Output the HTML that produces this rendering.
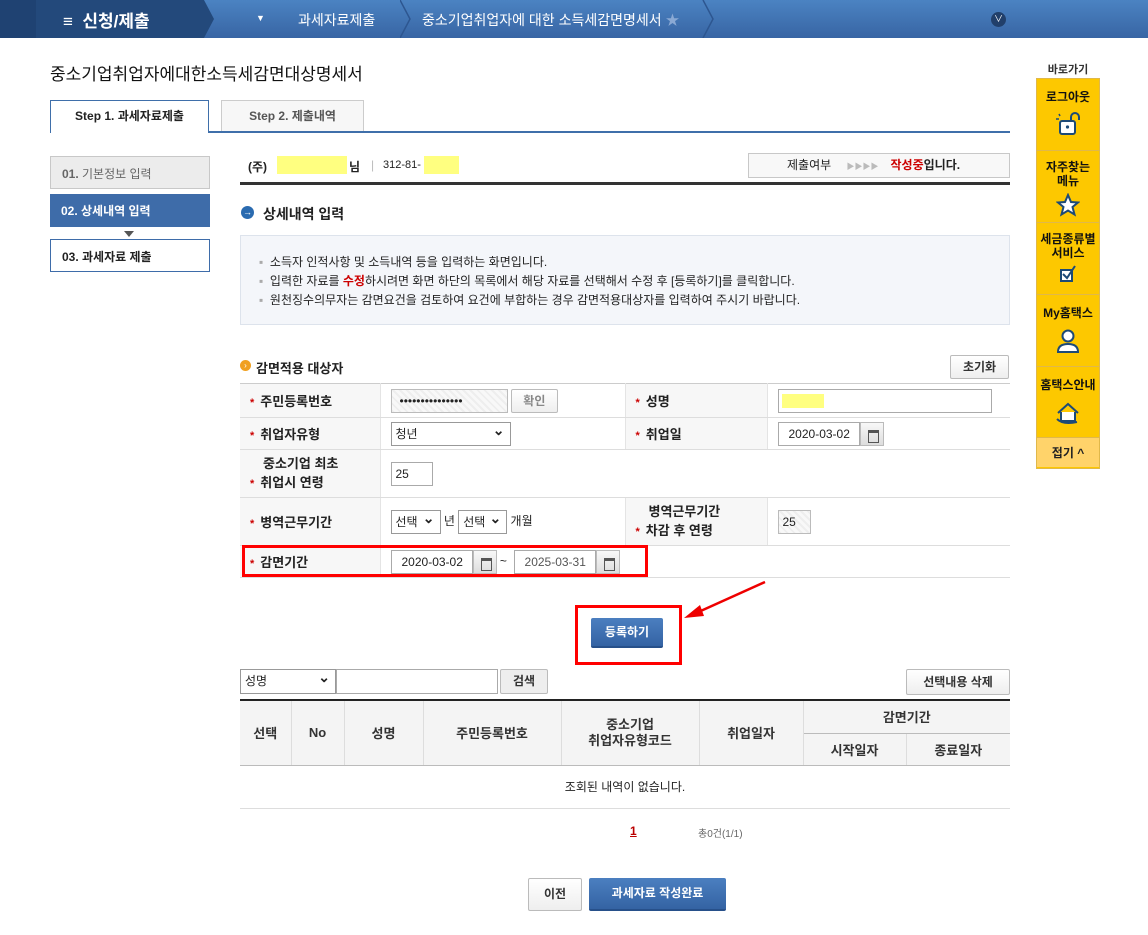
<!DOCTYPE html>
<html><head><meta charset="utf-8"><style>
*{margin:0;padding:0;box-sizing:border-box}
body{width:1148px;height:935px;position:relative;background:#fff;font-family:"Liberation Sans","Noto Sans CJK KR","NanumGothic",sans-serif;font-size:12px;color:#222;overflow:hidden}
.a{position:absolute}
.top{left:0;top:0;width:1148px;height:38px;background:linear-gradient(#4b83c2,#3865a4)}
.btn{position:absolute;border:1px solid #bbb;background:linear-gradient(#fff,#eee);text-align:center;font-weight:bold;color:#333;border-radius:2px}
.bb{position:absolute;background:linear-gradient(#4b7fc0,#3463a3);color:#fff;font-weight:bold;text-align:center;border-radius:2px;border-bottom:2px solid #27508a}
table{border-collapse:collapse}
.ft td{border-bottom:1px solid #ddd;height:32px;vertical-align:middle}
.ft td.l{background:#f7f7f7;font-weight:bold;font-size:13px;padding-left:10px;border-right:1px solid #e4e4e4}
.ft td.v{padding-left:10px;border-right:1px solid #e4e4e4}
.st{color:#c00;font-size:11px;margin-right:6px}
.inp{display:inline-block;border:1px solid #aaa;height:24px;line-height:22px;padding-left:8px;font-size:12px;vertical-align:middle;background:#fff}
.cal{display:inline-block;width:24px;height:24px;border:1px solid #bbb;background:linear-gradient(#f8f8f8,#ddd);vertical-align:middle;position:relative}
.cal:after{content:"";position:absolute;left:7px;top:7px;width:9px;height:9px;border:1px solid #555;border-top:3px solid #555}
.hatch{background:repeating-linear-gradient(45deg,#eee 0 2px,#f8f8f8 2px 5px)}
.sel{display:inline-block;border:1px solid #999;height:24px;line-height:22px;padding-left:4px;vertical-align:middle;position:relative;background:#fff;font-size:12px}
.sel:after{content:"⌄";position:absolute;right:5px;top:-4px;font-weight:bold;font-size:14px}
.lt th{background:#f4f4f4;font-size:13px;font-weight:bold;border-right:1px solid #ddd;border-bottom:1px solid #bbb;color:#333}
.side div.s{height:72px;border-bottom:1px solid #e0b84a;text-align:center;font-weight:bold;font-size:12px;padding-top:9px;color:#111;position:relative}
</style></head><body>
<div class="a top"></div>
<div class="a" style="left:0;top:0;width:36px;height:38px;background:#1f4272"></div>
<div class="a" style="left:36px;top:0;width:167px;height:38px;background:#23497b"></div>
<svg class="a" style="left:200px;top:0" width="14" height="38"><polygon points="0,0 4,0 14,19 4,38 0,38" fill="#23497b"/></svg>
<svg class="a" style="left:400px;top:0" width="12" height="38"><polyline points="0,0 10,19 0,38" fill="none" stroke="#2d5690" stroke-width="1.5"/></svg>
<svg class="a" style="left:700px;top:0" width="14" height="38"><polyline points="3,0 13,19 3,38" fill="none" stroke="#2d5690" stroke-width="1.5"/></svg>
<div class="a" style="left:63px;top:7px;color:#fff;font-size:17px;font-weight:bold">≡&nbsp; 신청/제출</div>
<div class="a" style="left:256px;top:13px;color:#fff;font-size:9px">▼</div>
<div class="a" style="left:298px;top:10px;color:#fff;font-size:14px">과세자료제출</div>
<div class="a" style="left:422px;top:10px;color:#fff;font-size:14px">중소기업취업자에 대한 소득세감면명세서 <span style="color:#8aa9d4">★</span></div>
<div class="a" style="left:991px;top:12px;width:15px;height:15px;border-radius:50%;background:#213f6a;color:#fff;font-size:9px;text-align:center;line-height:15px">∨</div>

<div class="a" style="left:50px;top:60px;font-size:17px;color:#111">중소기업취업자에대한소득세감면대상명세서</div>
<div class="a" style="left:50px;top:131px;width:960px;height:2px;background:#3f6faa"></div>
<div class="a" style="left:50px;top:100px;width:159px;height:33px;border:1px solid #3f6faa;border-bottom:none;background:#fff;text-align:center;line-height:31px;font-weight:bold;font-size:12px;color:#222">Step 1. 과세자료제출</div>
<div class="a" style="left:221px;top:100px;width:143px;height:31px;border:1px solid #ccc;border-bottom:none;background:#f7f7f7;text-align:center;line-height:31px;font-weight:bold;font-size:12px;color:#555">Step 2. 제출내역</div>

<div class="a" style="left:50px;top:156px;width:160px;height:33px;background:#ececec;border:1px solid #c8c8c8;padding:8px 11px;color:#666;font-size:12px"><b>01.</b> 기본정보 입력</div>
<div class="a" style="left:50px;top:194px;width:160px;height:33px;background:#3e6ca9;padding:8px 11px;color:#fff;font-weight:bold;font-size:12px">02. 상세내역 입력</div>
<div class="a" style="left:124px;top:231px;width:0;height:0;border-left:5px solid transparent;border-right:5px solid transparent;border-top:6px solid #555"></div>
<div class="a" style="left:50px;top:239px;width:160px;height:33px;background:#fff;border:1px solid #3e6ca9;padding:8px 11px;color:#222;font-weight:bold;font-size:12px">03. 과세자료 제출</div>

<div class="a" style="left:248px;top:158px;font-weight:bold;font-size:12px">(주)</div>
<div class="a" style="left:277px;top:156px;width:70px;height:18px;background:#ffff80"></div>
<div class="a" style="left:349px;top:158px;font-weight:bold;font-size:12px">님</div>
<div class="a" style="left:371px;top:158px;color:#bbb">|</div>
<div class="a" style="left:383px;top:159px;font-size:11px">312-81-</div>
<div class="a" style="left:424px;top:156px;width:35px;height:18px;background:#ffff80"></div>
<div class="a" style="left:748px;top:153px;width:262px;height:25px;border:1px solid #c8c8c8;background:#f8f8f8;font-size:12px;line-height:23px;padding-left:38px">제출여부 <span style="color:#bbb;font-size:8px;margin:0 12px">▶▶▶▶</span><b style="color:#c00">작성중</b><b>입니다.</b></div>
<div class="a" style="left:240px;top:182px;width:770px;height:3px;background:#333"></div>

<div class="a" style="left:241px;top:206px;width:13px;height:13px;border-radius:50%;background:#2a6bb0;color:#fff;font-size:9px;text-align:center;line-height:13px">→</div>
<div class="a" style="left:263px;top:204px;font-weight:bold;font-size:14px">상세내역 입력</div>
<div class="a" style="left:240px;top:235px;width:770px;height:90px;background:#f4f6fa;border:1px solid #dde3ec;padding:17px 0 0 18px;font-size:12px;line-height:19px;color:#222">
<div><span style="color:#aaa">▪</span>&nbsp; 소득자 인적사항 및 소득내역 등을 입력하는 화면입니다.</div>
<div><span style="color:#aaa">▪</span>&nbsp; 입력한 자료를 <b style="color:#c00">수정</b>하시려면 화면 하단의 목록에서 해당 자료를 선택해서 수정 후 [등록하기]를 클릭합니다.</div>
<div><span style="color:#aaa">▪</span>&nbsp; 원천징수의무자는 감면요건을 검토하여 요건에 부합하는 경우 감면적용대상자를 입력하여 주시기 바랍니다.</div></div>

<div class="a" style="left:240px;top:360px;width:11px;height:11px;border-radius:50%;background:#f0a020;color:#fff;font-size:8px;text-align:center;line-height:11px">›</div>
<div class="a" style="left:256px;top:358px;font-weight:bold;font-size:13px">감면적용 대상자</div>
<div class="btn" style="left:950px;top:355px;width:59px;height:24px;line-height:22px;font-size:12px">초기화</div>

<table class="a ft" style="left:240px;top:383px;width:770px;border-top:1px solid #ccc">
<col style="width:140px"><col style="width:245px"><col style="width:142px"><col style="width:243px">
<tr style="height:34px"><td class="l"><span class="st">*</span>주민등록번호</td><td class="v"><span class="inp hatch" style="width:117px;border-color:#bbb">•••••••••••••••</span> <span class="btn" style="position:relative;display:inline-block;width:47px;height:24px;line-height:22px;color:#888;vertical-align:middle">확인</span></td><td class="l"><span class="st">*</span>성명</td><td class="v" style="border-right:none"><span class="inp" style="width:214px;padding-left:3px"><span style="display:inline-block;width:42px;height:14px;background:#ffff80;vertical-align:middle"></span></span></td></tr>
<tr><td class="l"><span class="st">*</span>취업자유형</td><td class="v"><span class="sel" style="width:120px">청년</span></td><td class="l"><span class="st">*</span>취업일</td><td class="v" style="border-right:none"><span class="inp" style="width:82px;padding-left:10px">2020-03-02</span><span class="cal"></span></td></tr>
<tr style="height:48px"><td class="l" style="line-height:19px"><div style="padding-left:13px">중소기업 최초</div><div><span class="st">*</span>취업시 연령</div></td><td class="v" colspan="3" style="border-right:none"><span class="inp" style="width:42px;padding-left:4px">25</span></td></tr>
<tr style="height:48px"><td class="l"><span class="st">*</span>병역근무기간</td><td class="v"><span class="sel" style="width:50px">선택</span> 년 <span class="sel" style="width:49px">선택</span> 개월</td><td class="l" style="line-height:19px"><div style="padding-left:13px">병역근무기간</div><div><span class="st">*</span>차감 후 연령</div></td><td class="v" style="border-right:none"><span class="inp hatch" style="width:33px;padding-left:4px;border-color:#bbb">25</span></td></tr>
<tr><td class="l"><span class="st">*</span>감면기간</td><td class="v" colspan="3" style="border-right:none"><span class="inp" style="width:82px;padding-left:10px">2020-03-02</span><span class="cal"></span> ~&nbsp; <span class="inp" style="width:82px;padding-left:10px;color:#555">2025-03-31</span><span class="cal"></span></td></tr>
</table>
<div class="a" style="left:242px;top:545px;width:406px;height:32px;border:3px solid #f00"></div>

<div class="bb" style="left:591px;top:618px;width:72px;height:30px;line-height:28px;font-size:12px">등록하기</div>
<div class="a" style="left:575px;top:605px;width:107px;height:60px;border:3px solid #f00"></div>
<svg class="a" style="left:680px;top:578px" width="90" height="45"><line x1="85" y1="4" x2="14" y2="36" stroke="#e00" stroke-width="2.5"/><polygon points="4,40 20,27 24,38" fill="#e00"/></svg>

<span class="a sel" style="left:240px;top:669px;width:96px;height:25px">성명</span>
<span class="a inp" style="left:336px;top:669px;width:162px;height:25px"></span>
<div class="btn" style="left:500px;top:669px;width:48px;height:25px;line-height:23px;background:#eee">검색</div>
<div class="btn" style="left:906px;top:669px;width:104px;height:26px;line-height:24px">선택내용 삭제</div>

<table class="a lt" style="left:240px;top:699px;width:770px;border-top:2px solid #222">
<col style="width:51px"><col style="width:53px"><col style="width:79px"><col style="width:138px"><col style="width:138px"><col style="width:104px"><col style="width:103px"><col style="width:104px">
<tr style="height:33px"><th rowspan="2">선택</th><th rowspan="2">No</th><th rowspan="2">성명</th><th rowspan="2">주민등록번호</th><th rowspan="2" style="line-height:16px">중소기업<br>취업자유형코드</th><th rowspan="2">취업일자</th><th colspan="2" style="border-right:none;border-bottom:1px solid #bbb">감면기간</th></tr>
<tr style="height:32px"><th>시작일자</th><th style="border-right:none">종료일자</th></tr>
<tr style="height:43px"><td colspan="8" style="text-align:center;font-size:12px;border-bottom:1px solid #ddd">조회된 내역이 없습니다.</td></tr>
</table>

<div class="a" style="left:630px;top:824px;color:#b00;font-weight:bold;text-decoration:underline;font-size:12px">1</div>
<div class="a" style="left:698px;top:825px;color:#666;font-size:10px">총0건(1/1)</div>

<div class="btn" style="left:528px;top:878px;width:54px;height:33px;line-height:31px;font-size:12px">이전</div>
<div class="bb" style="left:589px;top:878px;width:137px;height:33px;line-height:31px;font-size:12px">과세자료 작성완료</div>

<div class="a" style="left:1036px;top:61px;width:64px;text-align:center;font-size:11px;font-weight:bold;color:#333">바로가기</div>
<div class="a side" style="left:1036px;top:78px;width:64px;height:391px;background:#fdc800;border:1px solid #e0b84a">
<div class="s">로그아웃<br><svg width="30" height="30" viewBox="0 0 30 30" style="margin-top:4px"><rect x="7" y="12" width="15" height="13" rx="2" fill="#fff" stroke="#1d4a77" stroke-width="2"/><path d="M18 12 V8 a4 4 0 0 1 8 0 v3" fill="none" stroke="#1d4a77" stroke-width="2"/><circle cx="14.5" cy="18" r="1.6" fill="#1d4a77"/><path d="M3 10h3M6 5l1 2" stroke="#1d4a77" stroke-width="1.5"/></svg></div>
<div class="s" style="line-height:14px">자주찾는<br>메뉴<br><svg width="24" height="24" viewBox="0 0 24 24" style="margin-top:5px"><polygon points="12,2 15,9 22,9.5 16.5,14 18.5,21.5 12,17.5 5.5,21.5 7.5,14 2,9.5 9,9" fill="#fff" stroke="#1d4a77" stroke-width="2"/></svg></div>
<div class="s" style="line-height:14px">세금종류별<br>서비스<br><svg width="20" height="18" viewBox="0 0 20 18" style="margin-top:5px"><rect x="3" y="5" width="11" height="11" fill="#fff" stroke="#1d4a77" stroke-width="2"/><path d="M5 9l4 4 8-12" fill="none" stroke="#1d4a77" stroke-width="2"/></svg></div>
<div class="s">My홈택스<br><svg width="26" height="30" viewBox="0 0 26 30" style="margin-top:6px"><circle cx="13" cy="9" r="5.5" fill="#fff" stroke="#1d4a77" stroke-width="2"/><path d="M3 25 q0-8 10-8 q10 0 10 8z" fill="#fff" stroke="#1d4a77" stroke-width="2"/></svg></div>
<div class="s" style="border-bottom:none;height:70px">홈택스안내<br><svg width="30" height="30" viewBox="0 0 30 30" style="margin-top:6px"><path d="M5 14 L15 5 L25 14" fill="none" stroke="#1d4a77" stroke-width="2"/><path d="M8 13v9h14v-9" fill="#fff" stroke="#1d4a77" stroke-width="2"/><path d="M4 20 q6 6 20 3" fill="none" stroke="#1d4a77" stroke-width="2"/></svg></div>
<div style="background:#ffd36a;height:30px;text-align:center;line-height:30px;font-weight:bold;font-size:12px;border-top:1px solid #e0b84a">접기 ^</div>
</div>
</body></html>
